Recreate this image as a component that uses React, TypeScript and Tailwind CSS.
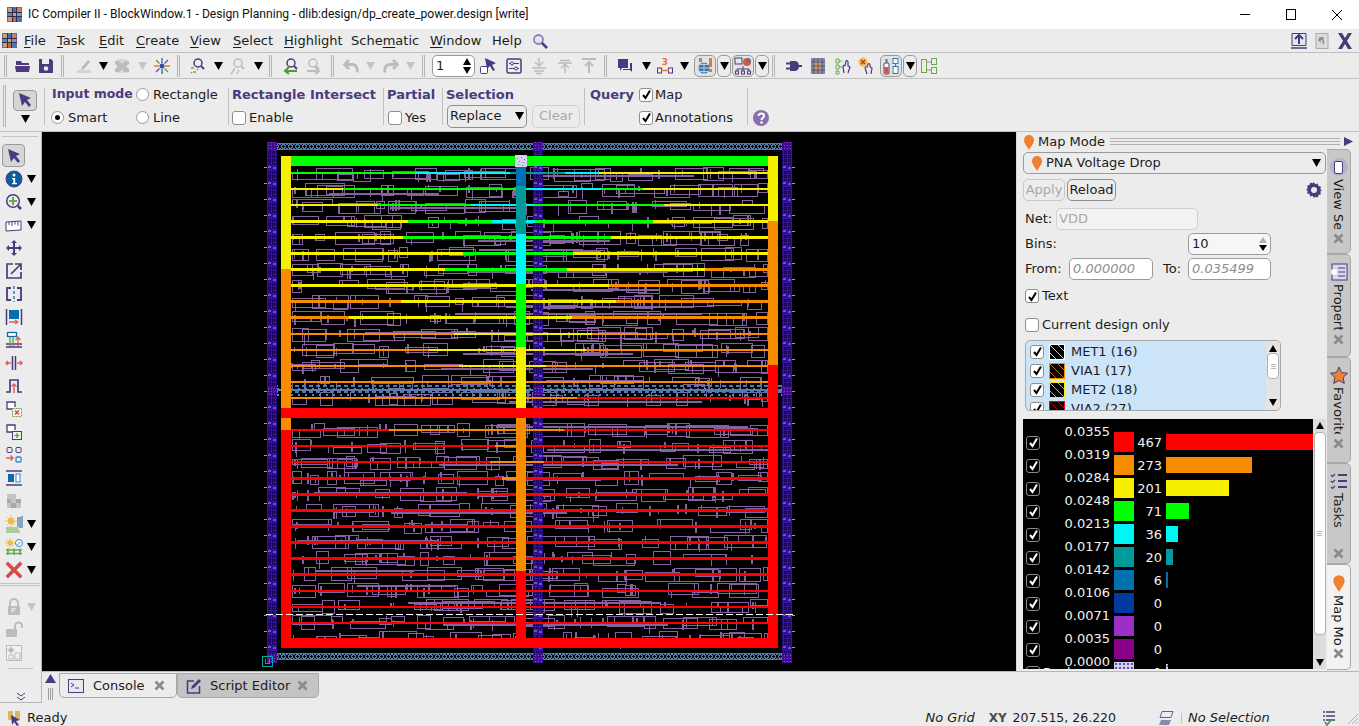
import type { ReactNode } from "react";

const P = "#4b3a7d";
const G = "#bcbcbc";
const RED = "#ff0000";
const ORG = "#f88c00";
const YEL = "#f5f000";
const GRN = "#00ff00";
const CYN = "#00f5f5";
const TEA = "#009a9a";
const BLU = "#0070b0";

const S = ({ children, size = 18 }: { children: ReactNode; size?: number }) => (
  <svg width={size} height={size} viewBox="0 0 18 18" className="block shrink-0">
    {children}
  </svg>
);

const Tri = ({ gray = false }: { gray?: boolean }) => (
  <svg width="9" height="8" viewBox="0 0 9 8" className="block shrink-0">
    <polygon points="0,0 9,0 4.5,8" fill={gray ? "#c4c4c4" : "#000"} />
  </svg>
);

const Arrow = () => (
  <S>
    <path d="M3 2l12 5-4 2 4 5-2 2-4-5-3 4z" fill={P} />
  </S>
);

const AppIcon = () => (
  <svg width="15" height="15" viewBox="0 0 15 15" className="block shrink-0">
    <rect width="15" height="15" fill="#6a6a8a" />
    <rect x="1" y="1" width="4" height="4" fill="#c9a070" />
    <rect x="6" y="1" width="3" height="4" fill="#3a78b0" />
    <rect x="10" y="1" width="4" height="4" fill="#d08060" />
    <rect x="1" y="6" width="4" height="3" fill="#5a8ab8" />
    <rect x="6" y="6" width="3" height="3" fill="#e0a050" />
    <rect x="10" y="6" width="4" height="3" fill="#7a9ac0" />
    <rect x="1" y="10" width="4" height="4" fill="#d89868" />
    <rect x="6" y="10" width="3" height="4" fill="#c86848" />
    <rect x="10" y="10" width="4" height="4" fill="#4a78a8" />
    <path d="M5.5 0v15M9.5 0v15M0 5.5h15M0 9.5h15" stroke="#2c2c50" strokeWidth="1" />
  </svg>
);

const Mag = ({ c = P, x = 9, y = 6 }: { c?: string; x?: number; y?: number }) => (
  <>
    <circle cx={x} cy={y} r="4" fill="none" stroke={c} strokeWidth="1.5" />
    <path d={`M${x + 3} ${y + 3}l3 3`} stroke={c} strokeWidth="2" />
  </>
);

const icons: Record<string, ReactNode> = {
  folder: (
    <S>
      <path d="M2 4h5l1 2h7v2H2z" fill={P} />
      <path d="M1 9h15l-1 6H2z" fill={P} />
    </S>
  ),
  save: (
    <S>
      <path d="M2 2h12l2 2v12H2z" fill={P} />
      <rect x="5" y="2" width="7" height="5" fill="#ececec" />
      <circle cx="9" cy="11.5" r="2.3" fill="#ececec" />
    </S>
  ),
  pencil: (
    <S>
      <path d="M7 10l6-7 2 2-6 7-3 1z" fill={G} />
      <rect x="2" y="13" width="14" height="3" fill="#d4d4d4" />
    </S>
  ),
  grayx: (
    <S>
      <rect x="4" y="2" width="10" height="14" fill="#d6d6d6" />
      <path d="M2 4h4l3 3 3-3h4v3l-3 2 3 3v3h-4l-3-3-3 3H2v-3l3-3-3-2z" fill={G} />
    </S>
  ),
  star: (
    <S>
      <path d="M9 1v5M9 12v5" stroke="#3a78b0" strokeWidth="1.5" />
      <path d="M1 9h5M12 9h5" stroke="#e07a30" strokeWidth="1.5" />
      <path d="M3 3l3.5 3.5M11.5 11.5L15 15" stroke="#6aa84f" strokeWidth="1.5" />
      <path d="M15 3l-3.5 3.5M6.5 11.5L3 15" stroke="#7a5ab0" strokeWidth="1.5" />
      <circle cx="9" cy="9" r="2.5" fill="#3a4a9a" />
    </S>
  ),
  selmag: (
    <S>
      <Mag />
      <path d="M2 11h3M4 15h3M2 16l1-1M8 12l1 1" stroke="#6aa84f" strokeWidth="1.5" />
    </S>
  ),
  graymag: (
    <S>
      <Mag c={G} />
      <path d="M6 11l-4 6M10 13l-2 4" stroke={G} strokeWidth="1.5" />
    </S>
  ),
  magback: (
    <S>
      <Mag />
      <path d="M15 14H4M7 10l-4 4 4 3" fill="none" stroke="#4f9a3f" strokeWidth="2" />
    </S>
  ),
  magfwd: (
    <S>
      <Mag c={G} />
      <path d="M3 14h11M11 10l4 4-4 3" fill="none" stroke={G} strokeWidth="2" />
    </S>
  ),
  undo: (
    <S>
      <path d="M7 3L2.500 7.500 7 12M3 7.500h7c4 0 6 3 5 8" fill="none" stroke={G} strokeWidth="2.800" />
    </S>
  ),
  redo: (
    <S>
      <path d="M11 3l4.500 4.500L11 12M15 7.500H8c-4 0-6 3-5 8" fill="none" stroke={G} strokeWidth="2.800" />
    </S>
  ),
  cursorbox: (
    <S>
      <rect x="1.5" y="9.5" width="7" height="7" rx="1" fill="#fff" stroke={P} />
      <path d="M6 1l11 5-4 2 3 5-2 1-3-5-3 3z" fill={P} />
    </S>
  ),
  settings: (
    <S>
      <rect x="2" y="2" width="14" height="14" rx="1.5" fill="none" stroke={P} strokeWidth="1.5" />
      <path d="M4 6.5h10M4 11.5h10" stroke={P} />
      <circle cx="7" cy="6.5" r="1.5" fill="#ececec" stroke={P} />
      <circle cx="11" cy="11.5" r="1.5" fill="#ececec" stroke={P} />
    </S>
  ),
  aligndown: (
    <S>
      <path d="M9 1v8M5 5l4 4 4-4" fill="none" stroke={G} strokeWidth="1.5" />
      <path d="M2 11h14M4 14h10M6 16.5h6" stroke={G} strokeWidth="1.5" />
    </S>
  ),
  alignup: (
    <S>
      <path d="M9 16V8M5 11l4-4 4 4" fill="none" stroke={G} strokeWidth="1.5" />
      <path d="M2 6h14M4 3.5h10" stroke={G} strokeWidth="1.5" />
    </S>
  ),
  aligntop: (
    <S>
      <path d="M2 2h14" stroke={G} strokeWidth="2" />
      <path d="M9 16V5M5 9l4-4 4 4" fill="none" stroke={G} strokeWidth="2" />
    </S>
  ),
  chat: (
    <S>
      <path d="M2 2h10v9H6l-2 3v-3H2z" fill={P} />
      <path d="M14 6h2v9l-2-2H7v-1h7z" fill={P} />
    </S>
  ),
  dim3: (
    <S>
      <text x="9" y="8" fontSize="9" fontWeight="700" fill="#e07a30" textAnchor="middle" fontFamily="'DejaVu Sans', sans-serif">3</text>
      <rect x="1.5" y="11" width="4" height="5" fill="none" stroke={P} />
      <rect x="12.5" y="11" width="4" height="5" fill="none" stroke={P} />
      <path d="M5 13.5h8" stroke="#e07a30" strokeWidth="1.5" />
    </S>
  ),
  globe: (
    <S>
      <circle cx="8" cy="11" r="5.5" fill="#3a78b0" />
      <path d="M2.5 11h11M8 5.5v11M4 7.5h8M4 14.5h8" stroke="#d0e0f0" strokeWidth=".8" />
      <rect x="13" y="1" width="3" height="9" fill="#e07a30" />
      <rect x="13" y="12" width="3" height="3" fill="#e07a30" />
      <rect x="3" y="1" width="3" height="4" fill="#6aa84f" />
    </S>
  ),
  hier: (
    <S>
      <rect x="1" y="1" width="7" height="6" fill="#dfe8f2" stroke={P} />
      <circle cx="13" cy="5" r="4" fill="#d05a3a" />
      <path d="M13 1v4h4a4 4 0 0 0-4-4z" fill="#3a78b0" />
      <path d="M9 9v3M3 12h12M3 12v2M9 12v2M15 12v2" stroke={P} fill="none" />
      <rect x="1.5" y="14" width="3" height="3" fill="none" stroke={P} />
      <rect x="7.5" y="14" width="3" height="3" fill="none" stroke={P} />
      <rect x="13.5" y="14" width="3" height="3" fill="none" stroke={P} />
    </S>
  ),
  plug: (
    <S>
      <path d="M5 4h5c3 0 4 3 4 5s-1 5-4 5H5z" fill={P} />
      <path d="M1 6.5h4M1 11.5h4M14 9h3" stroke={P} strokeWidth="2" />
    </S>
  ),
  chip: (
    <S>
      <rect x="2" y="1" width="14" height="16" fill="#8a8aa8" />
      <rect x="5" y="4" width="8" height="10" fill="#d89868" />
      <path d="M5 1v16M9 1v16M13 1v16M2 5h14M2 9h14M2 13h14" stroke="#3a4a7a" strokeWidth=".8" />
    </S>
  ),
  hand: (
    <S>
      <path d="M2 2h3v4H2zM2 8h3v4H2zM2 14h3v3H2z" fill="none" stroke="#6aa84f" />
      <path d="M5 4h3M5 10h3" stroke="#6aa84f" />
      <path d="M10 16l-1-6c0-2 2-2 2-1l1-5c1-1 2 0 2 1v4l2 1-2 6" fill="none" stroke={P} strokeWidth="1.2" />
    </S>
  ),
  handx: (
    <S>
      <circle cx="6" cy="5" r="4.5" fill="#f0c040" />
      <path d="M4 3l4 4M8 3L4 7" stroke="#d03030" strokeWidth="1.5" />
      <path d="M10 17l-2-6c0-2 2-1 2-1l1-3c1-1 2 0 2 1v2l2 1-1 6" fill="none" stroke={P} strokeWidth="1.2" />
    </S>
  ),
  bottles: (
    <S>
      <rect x="2" y="6" width="5" height="11" rx="1" fill="#fff" stroke={P} />
      <rect x="2.5" y="10" width="4" height="6.5" fill="#e0503a" />
      <rect x="3.5" y="2" width="2" height="4" fill="#3a78b0" />
      <rect x="11" y="1.5" width="5" height="5" fill="#fff" stroke="#3a78b0" />
      <rect x="11" y="9.5" width="5" height="7" fill="#fff" stroke="#3a78b0" />
      <path d="M13.5 6v4" stroke="#3a78b0" />
    </S>
  ),
  greenlink: (
    <S>
      <rect x="1.5" y="2.5" width="5" height="13" fill="none" stroke="#6aa84f" />
      <rect x="11.5" y="1.5" width="5" height="6" fill="none" stroke="#6aa84f" />
      <rect x="11.5" y="10.5" width="5" height="6" fill="none" stroke="#6aa84f" />
      <path d="M6 5h6M6 13h6" stroke="#6aa84f" />
    </S>
  ),
  upbox: (
    <S>
      <path d="M2 1.5h14v12H2z" fill="#dfe8f2" stroke={P} />
      <path d="M9 12V3M5 7l4-4 4 4" fill="none" stroke={P} strokeWidth="2" />
      <path d="M1 16h16" stroke={P} strokeWidth="1.5" />
    </S>
  ),
  restore: (
    <S>
      <rect x="3" y="1.5" width="12" height="15" fill="#dcdcdc" stroke="#aaa" />
      <path d="M11 6H7L6 8l2 2M7 7c4 0 4 3 3 5" fill="none" stroke="#8a8a8a" strokeWidth="1.5" />
    </S>
  ),
  bigx: (
    <S>
      <path d="M2 1h4l3 5 3-5h4l-5 8 5 8h-4l-3-5-3 5H2l5-8z" fill={P} />
    </S>
  ),
  info: (
    <S>
      <circle cx="9" cy="9" r="8" fill="#0a5fa0" stroke={P} />
      <circle cx="9" cy="5" r="1.5" fill="#fff" />
      <path d="M7 8h3.2v5H12v1.3H7V13h1.3V9.3H7z" fill="#fff" />
    </S>
  ),
  zoomplus: (
    <S>
      <circle cx="8" cy="8" r="6.3" fill="none" stroke={P} strokeWidth="1.5" />
      <path d="M8 4v8M4 8h8" stroke="#6aa84f" strokeWidth="2" />
      <path d="M13 13l3 3" stroke={P} strokeWidth="2.5" />
    </S>
  ),
  ruler: (
    <S>
      <path d="M1 6l15-1v9l-15 1z" fill="#fff" stroke={P} />
      <path d="M4 6v3M7 6v4M10 5.500v3M13 5.500v4" stroke={P} />
    </S>
  ),
  move: (
    <S>
      <path d="M9 1l3 3h-2v4h4V6l3 3-3 3v-2h-4v4h2l-3 3-3-3h2v-4H4v2L1 9l3-3v2h4V4H6z" fill={P} />
    </S>
  ),
  export: (
    <S>
      <path d="M8 2H2v14h14v-6" fill="none" stroke={P} strokeWidth="1.7" />
      <path d="M6 12L15 3M10 2h6v6" fill="none" stroke={P} strokeWidth="1.7" />
    </S>
  ),
  split: (
    <S>
      <path d="M6 3H2v12h4M12 3h4v12h-4" fill="none" stroke={P} strokeWidth="1.8" />
      <path d="M9 1v16" stroke="#3a78b0" strokeWidth="1.5" strokeDasharray="3 2" />
    </S>
  ),
  fitbar: (
    <S>
      <path d="M1.500 1v16M16.500 1v16" stroke={P} strokeWidth="1.5" />
      <rect x="4" y="2" width="10" height="9" fill="#0a6cad" />
      <path d="M4 14h9M10 12l3 2-3 2" fill="none" stroke="#e0605a" strokeWidth="1.3" />
    </S>
  ),
  stack: (
    <S>
      <rect x="2.500" y="1.500" width="9" height="4" fill="#fff" stroke="#0a6cad" strokeWidth="1.3" />
      <path d="M1 13h16M1 16h16" stroke={P} strokeWidth="1.5" />
      <path d="M5 6v9M8 6v9" stroke="#6aa84f" strokeWidth="1.5" />
      <path d="M13 15V7M10.500 9l2.500-3 2.500 3" fill="none" stroke="#e0605a" strokeWidth="1.3" />
    </S>
  ),
  spread: (
    <S>
      <path d="M7.500 2v14M10.500 2v14" stroke={P} strokeWidth="1.5" />
      <path d="M1 9h5M3 7L1 9l2 2M12 9h5M15 7l2 2-2 2" fill="none" stroke="#e0605a" strokeWidth="1.5" />
    </S>
  ),
  step: (
    <S>
      <path d="M1 15h4V3h8v12h4" fill="none" stroke={P} strokeWidth="1.7" />
      <path d="M9 16V7M6.500 9.500L9 7l2.500 2.500" fill="none" stroke="#e0605a" strokeWidth="1.5" />
    </S>
  ),
  delbox: (
    <S>
      <path d="M8 9H2V2h8v5" fill="#fff" stroke={P} strokeWidth="1.3" />
      <rect x="7.500" y="8.500" width="9" height="8" fill="#f2f7ee" stroke="#6aa84f" strokeDasharray="2 1" />
      <path d="M10 10.500l4 4M14 10.500l-4 4" stroke="#e0403a" strokeWidth="1.3" />
    </S>
  ),
  addbox: (
    <S>
      <path d="M8 9H2V2h8v5" fill="#fff" stroke={P} strokeWidth="1.3" />
      <rect x="7.500" y="8.500" width="9" height="8" fill="#f2f7ee" stroke={P} />
      <path d="M12 10v5M9.500 12.500h5" stroke="#6aa84f" strokeWidth="1.5" />
    </S>
  ),
  fourbox: (
    <S>
      <rect x="2" y="1.500" width="5" height="5" rx="1" fill="none" stroke={P} />
      <rect x="11" y="1.500" width="5" height="5" rx="1" fill="none" stroke={P} />
      <rect x="11" y="11" width="5" height="5" rx="1" fill="none" stroke="#3a88c0" strokeWidth="1.3" />
      <path d="M1 12h7M5.500 9.500L8 12l-2.500 2.500" fill="none" stroke="#e0605a" strokeWidth="1.4" />
    </S>
  ),
  pillar: (
    <S>
      <path d="M1 2h16M1 16h16" stroke={P} strokeWidth="1.7" />
      <rect x="3" y="5" width="6" height="8" fill="#0a6cad" />
      <rect x="11" y="5" width="4" height="8" fill="#fff" stroke="#3a88c0" />
    </S>
  ),
  checker: (
    <S>
      <path d="M2 2h9v5h5v9H2z" fill="#c4c4c4" />
      <path d="M2 7h4v4H2zM6 11h5v5H6zM11 7h5v4h-5z" fill="#a8a8a8" />
    </S>
  ),
  sunlines: (
    <S>
      <circle cx="6" cy="6" r="3" fill="#f2a93a" />
      <path d="M6 0v12M0 6h12M2 2l8 8M10 2l-8 8" stroke="#f2c03a" strokeWidth="1" />
      <path d="M1 13h12M1 15h13M1 17h14" stroke="#6aa84f" strokeWidth="1.2" />
      <path d="M13 2v10M15 2v11M17 1v12" stroke="#3a78b0" strokeWidth="1.2" />
    </S>
  ),
  sunfence: (
    <S>
      <circle cx="5" cy="5" r="2.500" fill="#f2a93a" />
      <path d="M5 0v10M0 5h10M1.500 1.500l7 7M8.500 1.500l-7 7" stroke="#f2c03a" />
      <circle cx="14" cy="5" r="3.500" fill="#fff" stroke="#3a88c0" />
      <path d="M12.500 7l3-3" stroke="#3a88c0" />
      <path d="M1 12h16M1 15.500h16M3 10.500V17M9 10.500V17M15 10.500V17" stroke="#6aa84f" strokeWidth="1.6" />
    </S>
  ),
  redx: (
    <S>
      <path d="M3 0.500L9 6.500l6-6L17.500 3 11.500 9l6 6L15 17.500l-6-6-6 6L.500 15l6-6-6-6z" fill="#d84a4a" />
    </S>
  ),
  lock: (
    <S>
      <path d="M5 8V5a4 4 0 0 1 8 0v3" fill="none" stroke={G} strokeWidth="2" />
      <rect x="3" y="8" width="12" height="9" rx="1" fill={G} />
      <path d="M7 10.500h4M7 10.500v4M7 12.500h3" stroke="#ececec" />
    </S>
  ),
  unlock: (
    <S>
      <path d="M10 8V5a3.500 3.500 0 0 1 7 0v2" fill="none" stroke={G} strokeWidth="2" />
      <rect x="1" y="8" width="11" height="8" rx="1" fill={G} />
    </S>
  ),
  graychip: (
    <S>
      <rect x="1.500" y="1.500" width="15" height="15" fill="#f2f2f2" stroke={G} />
      <circle cx="6" cy="6" r="2.500" fill={G} />
      <path d="M6 2v8M2 6h8" stroke={G} />
      <rect x="4" y="11" width="4" height="4" fill="none" stroke={G} />
      <rect x="10" y="9" width="5" height="6" fill="none" stroke={G} />
    </S>
  ),
  gear: (
    <S>
      <path d="M9 1l1.200 2.300 2.500-.8.800 2.500 2.500.8-.8 2.500L17 9l-1.800 1.700.8 2.500-2.500.8-.8 2.500-2.500-.8L9 17l-1.200-2.300-2.500.8-.8-2.500-2.500-.8.8-2.500L1 9l1.800-1.700-.8-2.500 2.500-.8.8-2.500 2.500.8z" fill={P} />
      <circle cx="9" cy="9" r="3" fill="#ececec" />
    </S>
  ),
  help: (
    <svg width="16" height="16" viewBox="0 0 16 16" className="block">
      <circle cx="8" cy="8" r="8" fill="#8a6fb0" />
      <path d="M5.500 6c0-3.500 5.500-3.500 5.500 0 0 2-2.500 2-2.500 4" fill="none" stroke="#fff" strokeWidth="2" />
      <circle cx="8.500" cy="12.500" r="1.300" fill="#fff" />
    </svg>
  ),
};

const Sep = ({ className }: { className: string }) => (
  <div className={`flex h-[22px] items-center justify-center gap-[1px] ${className}`}>
    <div className="h-full w-[1px] bg-[#b4b4b4]" />
    <div className="h-full w-[1px] bg-[#b4b4b4]" />
  </div>
);

const Ic = ({ n, className = "w-[22px]" }: { n: string; className?: string }) => (
  <div className={`flex items-center justify-center ${className}`}>{icons[n]}</div>
);

const Dd = ({ gray = false, className = "w-[16px]" }: { gray?: boolean; className?: string }) => (
  <div className={`flex items-center justify-center ${className}`}>
    <Tri gray={gray} />
  </div>
);

const BoxIc = ({ n, className }: { n: string; className: string }) => (
  <div className={`flex h-[22px] w-[22px] items-center justify-center rounded-[5px] border border-[#9a9a9a] bg-[#e2e2e2] ${className}`}>{icons[n]}</div>
);

const BoxDd = ({ className }: { className: string }) => (
  <div className={`flex h-[22px] w-[14px] items-center justify-center rounded-[5px] border border-[#9a9a9a] ${className}`}>
    <Tri />
  </div>
);

const Check = ({ on = false, dark = false }: { on?: boolean; dark?: boolean }) => (
  <div className={`flex h-[14px] w-[14px] shrink-0 items-center justify-center rounded-[3px] border ${dark ? "border-[#8a8a8a] bg-black" : "border-[#8f8f8f] bg-white"}`}>
    {on && (
      <svg width="11" height="11" viewBox="0 0 11 11">
        <path d="M2 6l2.500 3L9 1.500" fill="none" stroke={dark ? "#fff" : "#000"} strokeWidth="2" />
      </svg>
    )}
  </div>
);

const Radio = ({ on = false }: { on?: boolean }) => (
  <div className="flex h-[13px] w-[13px] shrink-0 items-center justify-center rounded-full border border-[#9a9a9a] bg-white">
    {on && <div className="h-[5px] w-[5px] rounded-full bg-black" />}
  </div>
);

const Pin = ({ size = 16 }: { size?: number }) => (
  <svg width={size} height={size} viewBox="0 0 16 16" className="block shrink-0">
    <path d="M8 16C5 11 3 9 3 6a5 5 0 0 1 10 0c0 3-2 5-5 10z" fill="#f07f2e" />
  </svg>
);

const Mn = ({ a = "", u, b = "" }: { a?: string; u: string; b?: string }) => (
  <span>
    {a}
    <span className="underline underline-offset-2">{u}</span>
    {b}
  </span>
);

const Scroll = () => (
  <svg width="8" height="7" viewBox="0 0 8 7" className="block">
    <polygon points="4,0 8,7 0,7" fill="#000" />
  </svg>
);

const ScrollD = () => (
  <svg width="8" height="7" viewBox="0 0 8 7" className="block">
    <polygon points="0,0 8,0 4,7" fill="#000" />
  </svg>
);

// chip drawing: fake routing generated from a fixed seed so the picture is stable
let seed = 12345;
const rnd = (a: number, b: number) => {
  seed = (seed * 1103515245 + 12345) & 0x7fffffff;
  return a + Math.floor((seed / 0x7fffffff) * (b - a + 1));
};

const buildRouting = () => {
  let thin = "";
  let thick = "";
  for (let y = 167; y < 636; y += 16) {
    if (y > 405 && y < 418) continue;
    let x = 292;
    while (x < 765) {
      const w = rnd(8, 42);
      const h = rnd(5, 13);
      const o = rnd(0, 14 - h);
      if (rnd(0, 9) > 1) {
        const xe = Math.min(w, 767 - x);
        thin += `M${x}.5 ${y + o}.5h${xe}v${h}h-${xe}z`;
      }
      if (rnd(0, 9) > 3) thin += `M${x + rnd(1, 7)}.5 ${y + rnd(0, 6)}.5v${rnd(5, 12)}`;
      x += rnd(8, 30);
    }
    const s = rnd(291, 560);
    thick += `M${s} ${y + rnd(3, 12)}h${Math.min(rnd(80, 260), 768 - s)}`;
    for (let i = 0; i < 11; i++) {
      const vx = rnd(292, 760);
      thick += `M${vx} ${y + rnd(1, 5)}v${rnd(5, 11)}`;
    }
  }
  return { thin, thick };
};

const routing = buildRouting();

type Seg = [number, string];
const strips: [number, number, Seg[]][] = [
  [172, 2, [[415, GRN], [510, CYN], [565, TEA], [599, CYN], [768, YEL]]],
  [188, 2, [[343, YEL], [521, GRN], [601, CYN], [643, GRN], [768, YEL]]],
  [204, 2, [[378, YEL], [471, GRN], [534, CYN], [664, GRN], [768, YEL]]],
  [220, 3, [[408, YEL], [492, GRN], [535, CYN], [653, GRN], [768, YEL]]],
  [236, 3, [[403, YEL], [611, GRN], [768, YEL]]],
  [252, 3, [[463, YEL], [573, GRN], [768, YEL]]],
  [268, 3, [[445, YEL], [567, GRN], [705, YEL], [768, ORG]]],
  [284, 3, [[609, YEL], [768, ORG]]],
  [300, 3, [[401, ORG], [616, YEL], [768, ORG]]],
  [316, 3, [[349, ORG], [572, YEL], [768, ORG]]],
  [333, 2, [[454, ORG], [592, YEL], [768, ORG]]],
  [349, 2, [[429, ORG], [586, YEL], [768, ORG]]],
  [365, 2, [[459, ORG], [546, YEL], [768, ORG]]],
  [381, 2, [[768, ORG]]],
  [397, 2, [[577, ORG], [768, RED]]],
  [429, 2, [[389, RED], [564, ORG], [768, RED]]],
  [445, 2, [[495, RED], [520, ORG], [768, RED]]],
  [461, 2, [[490, RED], [544, ORG], [768, RED]]],
  [477, 3, [[502, RED], [520, ORG], [768, RED]]],
  [493, 3, [[768, RED]]],
  [509, 3, [[768, RED]]],
  [525, 3, [[768, RED]]],
  [541, 3, [[768, RED]]],
  [557, 3, [[768, RED]]],
  [573, 3, [[768, RED]]],
  [590, 2, [[768, RED]]],
  [606, 2, [[768, RED]]],
  [622, 2, [[768, RED]]],
];

const ticks = Array.from({ length: 31 }, (_, i) => 165 + i * 16);

const Chip = () => (
  <svg width="974" height="539" viewBox="42 132 974 539" className="block shrink-0" shapeRendering="crispEdges">
    <defs>
      <pattern id="lat" x="0" y="142" width="7" height="9" patternUnits="userSpaceOnUse">
        <path d="M0 1.500h7M0 7.500h7M0 1.500l3.500 6 3.500-6M0 7.500l3.500-6 3.500 6" fill="none" stroke="#4c7bb2" strokeWidth="1" />
      </pattern>
      <pattern id="lat2" x="0" y="384" width="7" height="6" patternUnits="userSpaceOnUse">
        <rect x="1" y="1" width="4" height="2" fill="#4c7bb2" />
        <rect x="4" y="4" width="2" height="2" fill="#5a88b8" />
      </pattern>
      <pattern id="col" x="267" y="142" width="4" height="4" patternUnits="userSpaceOnUse">
        <rect width="4" height="4" fill="#160850" />
        <path d="M0 .500h4M.500 0v4M2 2h1" stroke="#3a14a0" strokeWidth="1" fill="none" />
      </pattern>
      <pattern id="mag" x="0" y="0" width="3" height="3" patternUnits="userSpaceOnUse">
        <rect width="3" height="3" fill="#3a1098" />
        <rect x="1" y="1" width="1" height="1" fill="#b030c8" />
      </pattern>
    </defs>
    <rect x="42" y="132" width="974" height="539" fill="#000" />
    <rect x="277" y="142" width="505" height="9" fill="url(#lat)" />
    <g transform="translate(0 510)">
      <rect x="277" y="142" width="505" height="9" fill="url(#lat)" />
    </g>
    <path d={routing.thick} fill="none" stroke="#87609f" strokeWidth="2" />
    <path d={routing.thin} fill="none" stroke="#87609f" strokeWidth="1" />
    <rect x="277" y="384" width="505" height="12" fill="url(#lat2)" />
    <rect x="277" y="389" width="505" height="2" fill="#5a7da8" />
    {[267, 533, 782].map((x) => (
      <g key={x}>
        <rect x={x} y="142" width="10" height="521" fill="url(#col)" />
        {ticks.map((y) => (
          <g key={y}>
            <rect x={x} y={y} width="10" height="5" fill="#28109a" />
            <rect x={x + 1} y={y + 1} width="3" height="2" fill="#8048c8" />
            <rect x={x + 6} y={y + 2} width="3" height="2" fill="#8048c8" />
          </g>
        ))}
        <rect x={x} y="142" width="10" height="9" fill="url(#mag)" />
        <rect x={x} y="653" width="10" height="9" fill="url(#mag)" />
        <rect x={x} y="386" width="10" height="9" fill="url(#mag)" />
      </g>
    ))}
    {ticks.map((y) => (
      <g key={y}>
        <rect x="264" y={y + 2} width="3" height="1" fill="#a0a0a0" />
        <rect x="792" y={y + 2} width="3" height="1" fill="#a0a0a0" />
      </g>
    ))}
    {strips.map(([y, h, segs]) =>
      segs.map(([xe, c], i) => {
        const xs = i === 0 ? 291 : segs[i - 1][0];
        return <rect key={`${y}-${i}`} x={xs} y={y} width={xe - xs} height={h} fill={c} />;
      }),
    )}
    <rect x="291" y="156" width="477" height="10" fill={GRN} />
    <rect x="281" y="156" width="10" height="113" fill={YEL} />
    <rect x="281" y="269" width="10" height="161" fill={ORG} />
    <rect x="281" y="430" width="10" height="218" fill={RED} />
    <rect x="768" y="156" width="10" height="65" fill={YEL} />
    <rect x="768" y="221" width="10" height="144" fill={ORG} />
    <rect x="768" y="365" width="10" height="283" fill={RED} />
    <rect x="516" y="166" width="10" height="20" fill={BLU} />
    <rect x="516" y="186" width="10" height="48" fill={TEA} />
    <rect x="516" y="234" width="10" height="50" fill={CYN} />
    <rect x="516" y="284" width="10" height="63" fill={GRN} />
    <rect x="516" y="347" width="10" height="61" fill={YEL} />
    <rect x="516" y="418" width="10" height="153" fill={ORG} />
    <rect x="516" y="571" width="10" height="67" fill={RED} />
    <rect x="281" y="408" width="497" height="10" fill={RED} />
    <rect x="281" y="638" width="497" height="10" fill={RED} />
    <rect x="515" y="155" width="12" height="12" fill="#d4d4f0" />
    <path d="M517 158h1M521 157h1M524 159h1M519 161h1M523 162h1M518 164h1M522 165h1" stroke="#40a060" />
    <path d="M266 614.500h527" stroke="#fff" strokeDasharray="7 3" />
    <rect x="262.500" y="656.500" width="10" height="10" fill="none" stroke="#00a8a8" />
    <path d="M265.500 659v4.500h4V659" fill="none" stroke="#00a8a8" />
  </svg>
);

const layers: [string, string][] = [
  ["MET1 (16)", "#ffffff"],
  ["VIA1 (17)", "#f88c00"],
  ["MET2 (18)", "#f5f000"],
  ["VIA2 (27)", "#ff0000"],
];

const bins: [string, string, string, string][] = [
  ["0.0355", "bg-[#ff0000]", "467", "w-[147px]"],
  ["0.0319", "bg-[#f88c00]", "273", "w-[86px]"],
  ["0.0284", "bg-[#f5f000]", "201", "w-[63px]"],
  ["0.0248", "bg-[#00ff00]", "71", "w-[23px]"],
  ["0.0213", "bg-[#00f5f5]", "36", "w-[12px]"],
  ["0.0177", "bg-[#009a9a]", "20", "w-[7px]"],
  ["0.0142", "bg-[#0070b0]", "6", "w-[2px]"],
  ["0.0106", "bg-[#003a9f]", "0", "w-0"],
  ["0.0071", "bg-[#9a30c8]", "0", "w-0"],
  ["0.0035", "bg-[#880088]", "0", "w-0"],
  ["0.0000", "bg-[#d4ccf4] bg-[radial-gradient(#5a50a0_1px,transparent_1px)] bg-[size:4px_4px]", "1", "w-[2px]"],
];

const leftRows: [string, boolean][] = [
  ["info", true],
  ["zoomplus", true],
  ["ruler", true],
  ["move", false],
  ["export", false],
  ["split", false],
  ["fitbar", false],
  ["stack", false],
  ["spread", false],
  ["step", false],
  ["delbox", false],
  ["addbox", false],
  ["fourbox", false],
  ["pillar", false],
  ["checker", false],
  ["sunlines", true],
  ["sunfence", true],
  ["redx", true],
];

const vtabs: [string, ReactNode, string, string][] = [
  ["View Settings", <div className="flex h-[18px] w-[18px] items-center justify-center rounded-full bg-[#b9b0d0]"><div className="h-[13px] w-[9px] rounded-[2px] border border-[#4b3a7d] bg-white" /></div>, "h-[105px]", "h-[50px]"],
  ["Properties", <svg width="18" height="18" viewBox="0 0 18 18"><rect x="2" y="1" width="15" height="16" fill="#dcd6ea" stroke="#4b3a7d" /><path d="M8 5h7M8 9h7M8 13h7" stroke="#4b3a7d" /><circle cx="4" cy="9" r="3" fill="#fff" /></svg>, "h-[103px]", "h-[46px]"],
  ["Favorites", <svg width="18" height="18" viewBox="0 0 18 18"><path d="M9 1l2.500 5.500 6 .8-4.400 4.100 1.200 6L9 14.500l-5.300 2.900 1.200-6L.5 7.300l6-.8z" fill="#f07f2e" stroke="#4b3a7d" /></svg>, "h-[106px]", "h-[47px]"],
  ["Tasks", <svg width="18" height="18" viewBox="0 0 18 18"><path d="M1 3l1.500 1.500L5 2M1 9l1.500 1.500L5 8M1 15l1.500 1.500L5 14" fill="none" stroke="#4b3a7d" strokeWidth="1.2" /><path d="M8 3h9M8 9h9M8 15h9" stroke="#4b3a7d" strokeWidth="2" /></svg>, "h-[101px]", "h-[51px]"],
];

const CloseX = ({ className = "" }: { className?: string }) => (
  <svg width="11" height="11" viewBox="0 0 11 11" className={`block shrink-0 ${className}`}>
    <path d="M1.500 1.500l8 8M9.500 1.500l-8 8" stroke="#8a8a8a" strokeWidth="2.600" />
  </svg>
);

const App = () => {
  return (
    <div className="flex h-[726px] w-[1359px] flex-col overflow-hidden bg-[#ececec] font-['DejaVu_Sans',sans-serif] text-[13px] text-[#1c1c1c]">
      {/* title bar */}
      <div className="flex h-[29px] shrink-0 items-center bg-white">
        <div className="ml-[7px] mr-[6px]">
          <AppIcon />
        </div>
        <span className="font-['Roboto',sans-serif] text-[12.15px] text-[#111]">IC Compiler II - BlockWindow.1 - Design Planning - dlib:design/dp_create_power.design [write]</span>
        <div className="ml-auto flex">
          <div className="flex h-[29px] w-[46px] items-center justify-center">
            <div className="h-[1px] w-[10px] bg-black" />
          </div>
          <div className="flex h-[29px] w-[46px] items-center justify-center">
            <div className="h-[11px] w-[10px] border border-black" />
          </div>
          <div className="flex h-[29px] w-[45px] items-center justify-center">
            <svg width="12" height="12" viewBox="0 0 12 12">
              <path d="M1 1l10 10M11 1L1 11" stroke="#000" />
            </svg>
          </div>
        </div>
      </div>

      {/* menu bar */}
      <div className="flex h-[23px] shrink-0 items-center bg-[#ececec] pl-[2px]">
        <div className="mr-[7px]">
          <AppIcon />
        </div>
        <div className="w-[33px]"><Mn u="F" b="ile" /></div>
        <div className="w-[42px]"><Mn u="T" b="ask" /></div>
        <div className="w-[37px]"><Mn u="E" b="dit" /></div>
        <div className="w-[54px]"><Mn u="C" b="reate" /></div>
        <div className="w-[43px]"><Mn u="V" b="iew" /></div>
        <div className="w-[51px]"><Mn u="S" b="elect" /></div>
        <div className="w-[67px]"><Mn u="H" b="ighlight" /></div>
        <div className="w-[79px]"><Mn a="Sche" u="m" b="atic" /></div>
        <div className="w-[62px]"><Mn u="W" b="indow" /></div>
        <div className="w-[40px]">Help</div>
        <svg width="16" height="16" viewBox="0 0 16 16" className="block">
          <circle cx="6.500" cy="6.500" r="4.500" fill="#dfe8f2" stroke="#8a80aa" strokeWidth="1.800" />
          <path d="M10 10l5 5" stroke="#4b3a7d" strokeWidth="2.500" />
        </svg>
        <div className="ml-auto flex pr-[3px]">
          <Ic n="upbox" className="w-[23px]" />
          <Ic n="restore" className="w-[23px]" />
          <Ic n="bigx" className="w-[23px]" />
        </div>
      </div>

      {/* main toolbar */}
      <div className="flex h-[27px] shrink-0 items-center border-y border-[#c0c0c0]">
        <Sep className="w-[11px]" />
        <Ic n="folder" className="w-[24px]" />
        <Ic n="save" />
        <Sep className="w-[10px]" />
        <Ic n="pencil" className="ml-[6px] w-[22px]" />
        <Dd />
        <Ic n="grayx" />
        <Dd gray className="w-[18px]" />
        <Ic n="star" />
        <Sep className="w-[10px]" />
        <Ic n="selmag" className="ml-[4px] w-[22px]" />
        <Dd className="w-[18px]" />
        <Ic n="graymag" />
        <Dd className="w-[18px]" />
        <Sep className="w-[6px]" />
        <Ic n="magback" className="ml-[7px] w-[22px]" />
        <Ic n="magfwd" />
        <Sep className="ml-[3px] w-[10px]" />
        <Ic n="undo" className="ml-[3px] w-[22px]" />
        <Dd gray />
        <Ic n="redo" className="ml-[2px] w-[22px]" />
        <Dd gray />
        <Sep className="w-[10px]" />
        <div className="ml-[4px] flex h-[22px] w-[43px] items-center justify-between rounded-[5px] border border-[#9a9a9a] bg-white pl-[3px] pr-[3px]">
          <span>1</span>
          <div className="flex flex-col gap-[2px]">
            <Scroll />
            <ScrollD />
          </div>
        </div>
        <Ic n="cursorbox" className="ml-[2px] w-[22px]" />
        <Ic n="settings" className="ml-[4px] w-[22px]" />
        <Ic n="aligndown" className="ml-[3px] w-[22px]" />
        <Ic n="alignup" className="ml-[4px] w-[22px]" />
        <Ic n="aligntop" className="ml-[2px] w-[22px]" />
        <Sep className="w-[10px]" />
        <Ic n="chat" className="ml-[4px] w-[22px]" />
        <Dd className="ml-[2px] w-[16px]" />
        <Ic n="dim3" />
        <Dd />
        <BoxIc n="globe" className="ml-[2px]" />
        <BoxDd className="ml-[1px]" />
        <BoxIc n="hier" className="ml-[1px]" />
        <BoxDd className="ml-[1px]" />
        <Sep className="w-[8px]" />
        <Ic n="plug" className="ml-[6px] w-[22px]" />
        <Ic n="chip" className="ml-[2px] w-[22px]" />
        <Ic n="hand" className="ml-[3px] w-[22px]" />
        <Ic n="handx" className="ml-[1px] w-[22px]" />
        <BoxIc n="bottles" className="ml-[3px]" />
        <BoxDd className="ml-[1px]" />
        <Ic n="greenlink" className="ml-[1px] w-[22px]" />
      </div>

      {/* option bar */}
      <div className="flex h-[53px] shrink-0 items-center border-b border-[#c0c0c0] pt-[2px]">
        <div className="ml-[3px] mr-[7px] flex h-[42px] gap-[1px]">
          <div className="w-[1px] bg-[#b4b4b4]" />
          <div className="w-[1px] bg-[#b4b4b4]" />
        </div>
        <div className="flex w-[24px] flex-col items-center">
          <div className="flex h-[21px] w-[24px] items-center justify-center rounded-[4px] border border-[#9a9a9a] bg-[#d6d6d6]"><Arrow /></div>
          <div className="mt-[4px]"><Tri /></div>
        </div>
        <div className="ml-[7px] h-[37px] w-[1px] bg-[#c0c0c0]" />
        <div className="ml-[7px] grid w-[176px] grid-cols-[91px_1fr] grid-rows-[23px_23px] items-center">
          <div className="text-[12.5px] font-bold text-[#4b3a7d]">Input mode</div>
          <div className="-ml-[7px] flex items-center gap-[4px]"><Radio /> <span>Rectangle</span></div>
          <div className="-ml-[1px] flex items-center gap-[4px]"><Radio on /> <span>Smart</span></div>
          <div className="-ml-[7px] flex items-center gap-[4px]"><Radio /> <span>Line</span></div>
        </div>
        <div className="h-[37px] w-[1px] bg-[#c0c0c0]" />
        <div className="ml-[3px] flex w-[151px] flex-col gap-[5px]">
          <div className="h-[18px] font-bold text-[#4b3a7d]">Rectangle Intersect</div>
          <div className="flex items-center gap-[3px]"><Check /> <span>Enable</span></div>
        </div>
        <div className="h-[37px] w-[1px] bg-[#c0c0c0]" />
        <div className="ml-[3px] flex w-[55px] flex-col gap-[5px]">
          <div className="h-[18px] font-bold text-[#4b3a7d]">Partial</div>
          <div className="flex items-center gap-[3px] pl-[1px]"><Check /> <span>Yes</span></div>
        </div>
        <div className="h-[37px] w-[1px] bg-[#c0c0c0]" />
        <div className="ml-[3px] flex w-[138px] flex-col gap-[2px]">
          <div className="h-[18px] font-bold text-[#4b3a7d]">Selection</div>
          <div className="flex items-center gap-[5px] pl-[1px]">
            <div className="flex h-[23px] w-[80px] items-center justify-between rounded-[5px] border border-[#8f8f8f] px-[2px]">
              <span>Replace</span>
              <Tri />
            </div>
            <div className="flex h-[23px] w-[48px] items-center justify-center rounded-[5px] border border-[#d0d0d0] text-[#a8a8a8]">Clear</div>
          </div>
        </div>
        <div className="h-[37px] w-[1px] bg-[#c0c0c0]" />
        <div className="ml-[5px] grid w-[152px] grid-cols-[49px_1fr] grid-rows-[23px_23px] items-center">
          <div className="font-bold text-[#4b3a7d]">Query</div>
          <div className="flex items-center gap-[2px]"><Check on /> <span>Map</span></div>
          <div />
          <div className="flex items-center gap-[2px]"><Check on /> <span>Annotations</span></div>
        </div>
        <div className="ml-[5px] h-[37px] w-[1px] bg-[#c0c0c0]" />
        <div className="ml-[5px] mt-[23px]">{icons.help}</div>
      </div>

      {/* work area */}
      <div className="flex h-[571px] shrink-0">
        <div className="flex w-[42px] shrink-0 flex-col items-start border-r border-b border-[#b8b8b8]">
          <div className="ml-[2px] mt-[4px] h-[1px] w-[36px] bg-[#c4c4c4]" />
          <div className="ml-[2px] mt-[7px] flex h-[23px] w-[23px] items-center justify-center rounded-[4px] border border-[#9a9a9a] bg-[#d6d6d6]">
            <Arrow />
          </div>
          {leftRows.map(([n, dd]) => (
            <div key={n} className="flex h-[23px] w-full items-center">
              <div className="flex w-[27px] justify-center">{icons[n]}</div>
              {dd && <Tri />}
            </div>
          ))}
          <div className="mt-[2px] flex w-[40px] flex-col gap-[1px]">
            <div className="h-[1px] bg-[#c4c4c4]" />
            <div className="h-[1px] bg-[#c4c4c4]" />
          </div>
          <div className="mt-[9px] flex h-[23px] w-full items-center">
            <div className="flex w-[27px] justify-center">{icons.lock}</div>
            <Tri gray />
          </div>
          <div className="flex h-[23px] w-[27px] items-center justify-center">{icons.unlock}</div>
          <div className="flex h-[23px] w-[27px] items-center justify-center">{icons.graychip}</div>
          <div className="ml-[8px] mt-[4px] h-[1px] w-[25px] bg-[#c4c4c4]" />
          <svg width="10" height="9" viewBox="0 0 10 9" className="ml-[16px] mt-[23px] block">
            <path d="M1 1l4 3 4-3M1 5l4 3 4-3" fill="none" stroke="#4b3a7d" />
          </svg>
        </div>

        <div className="flex min-w-0 flex-1 flex-col">
          <div className="flex h-[539px] shrink-0">
            <Chip />
            <div className="w-[1px] shrink-0 bg-[#d8d8d8]" />
            {/* map mode panel */}
            <div className="flex min-w-0 flex-1 flex-col">
              <div className="flex h-[17px] shrink-0 items-center pl-[4px] pt-[2px]">
                <Pin />
                <span className="ml-[1px] whitespace-nowrap">Map Mode</span>
                <div className="ml-[5px] flex h-[7px] w-[230px] shrink-0 flex-col justify-between">
                  <div className="h-[1px] bg-[#b0b0b0]" />
                  <div className="h-[1px] bg-[#b0b0b0]" />
                  <div className="h-[1px] bg-[#b0b0b0]" />
                </div>
                <svg width="9" height="9" viewBox="0 0 9 9" className="ml-[4px] block shrink-0">
                  <polygon points="0,0 9,4.500 0,9" fill="#4b3a7d" />
                </svg>
              </div>
              <div className="flex min-h-0 flex-1">
                <div className="w-[310px] shrink-0 pl-[6px] pt-[3px]">
                  <div className="flex h-[22px] w-[303px] items-center justify-between rounded-[5px] border border-[#9a9a9a] pl-[5px] pr-[4px]">
                    <div className="flex items-center gap-[1px]">
                      <Pin />
                      <span>PNA Voltage Drop</span>
                    </div>
                    <Tri />
                  </div>
                  <div className="mt-[5px] flex h-[22px] items-center gap-[2px]">
                    <div className="flex h-[22px] w-[42px] items-center justify-center rounded-[5px] border border-[#c8c8c8] text-[#a8a8a8]">Apply</div>
                    <div className="flex h-[22px] w-[49px] items-center justify-center rounded-[5px] border border-[#8f8f8f]">Reload</div>
                    <div className="ml-auto mr-[4px]">{icons.gear}</div>
                  </div>
                  <div className="mt-[7px] flex h-[22px] items-center">
                    <span className="w-[33px] pl-[2px]">Net:</span>
                    <div className="flex h-[22px] w-[142px] items-center rounded-[5px] border border-[#d0d0d0] bg-[#f2f2f2] pl-[2px] text-[#a8a8a8]">VDD</div>
                  </div>
                  <div className="mt-[3px] flex h-[22px] items-center">
                    <span className="w-[165px] pl-[2px]">Bins:</span>
                    <div className="flex h-[22px] w-[83px] items-center justify-between rounded-[5px] border border-[#9a9a9a] bg-[#f6f6f6] pl-[3px] pr-[3px]">
                      <span>10</span>
                      <div className="flex flex-col gap-[2px]">
                        <svg width="8" height="6" viewBox="0 0 8 6" className="block"><polygon points="4,0 8,6 0,6" fill="#b0b0b0" /></svg>
                        <svg width="8" height="6" viewBox="0 0 8 6" className="block"><polygon points="0,0 8,0 4,6" fill="#000" /></svg>
                      </div>
                    </div>
                  </div>
                  <div className="mt-[3px] flex h-[22px] items-center">
                    <span className="w-[46px] pl-[2px]">From:</span>
                    <div className="flex h-[22px] w-[84px] items-center rounded-[5px] border border-[#9a9a9a] bg-white pl-[3px] italic text-[#8e8e8e]">0.000000</div>
                    <span className="w-[35px] pl-[10px]">To:</span>
                    <div className="flex h-[22px] w-[83px] items-center rounded-[5px] border border-[#9a9a9a] bg-white pl-[3px] italic text-[#8e8e8e]">0.035499</div>
                  </div>
                  <div className="mt-[9px] flex h-[14px] items-center gap-[3px] pl-[2px]">
                    <Check on />
                    <span>Text</span>
                  </div>
                  <div className="mt-[15px] flex h-[14px] items-center gap-[3px] pl-[2px]">
                    <Check />
                    <span>Current design only</span>
                  </div>
                  <div className="ml-[2px] mt-[8px] flex h-[71px] w-[256px] overflow-hidden rounded-[5px] border border-[#a8a8a8] bg-[#cce4f7]">
                    <div className="flex-1 overflow-hidden pl-[4px] pt-[1px]">
                      {layers.map(([name, c]) => (
                        <div key={name} className="flex h-[19px] items-center">
                          <Check on />
                          <svg width="16" height="16" viewBox="0 0 16 16" className="ml-[5px] block shrink-0">
                            <rect x=".5" y=".5" width="15" height="15" fill="#000" stroke={c} />
                            <path d="M0 0l16 16M8 0l8 8M0 8l8 8" stroke={c} strokeWidth=".8" />
                          </svg>
                          <span className="ml-[6px] whitespace-nowrap">{name}</span>
                        </div>
                      ))}
                    </div>
                    <div className="flex w-[14px] flex-col items-center bg-[#e4e4e4]">
                      <div className="mt-[4px]"><Scroll /></div>
                      <div className="mt-[1px] flex h-[26px] w-[12px] flex-col items-center justify-center gap-[1px] rounded-[4px] border border-[#b0b0b0] bg-white">
                        <div className="h-[1px] w-[5px] bg-[#b8b8b8]" />
                        <div className="h-[1px] w-[5px] bg-[#b8b8b8]" />
                        <div className="h-[1px] w-[5px] bg-[#b8b8b8]" />
                      </div>
                      <div className="mt-auto mb-[4px]"><ScrollD /></div>
                    </div>
                  </div>
                  {/* histogram */}
                  <div className="mt-[8px] flex h-[250px] w-[303px]">
                    <div className="relative flex h-full w-[290px] overflow-hidden bg-black text-[#f2f2f2]">
                      <div className="w-[19px] shrink-0 pl-[3px] pt-[12px]">
                        {bins.map((b) => (
                          <div key={b[0]} className="flex h-[23px] items-center">
                            <Check on={b[0] !== "0.0000"} dark />
                            {b[0] === "0.0000" && <span className="ml-[3px] whitespace-nowrap">Background</span>}
                          </div>
                        ))}
                      </div>
                      <div className="w-[68px] shrink-0 pt-[1px]">
                        {bins.map((b) => (
                          <div key={b[0]} className="flex h-[23px] items-center justify-end">{b[0]}</div>
                        ))}
                      </div>
                      <div className="ml-[4px] flex w-[20px] shrink-0 flex-col gap-[3px] pt-[13px]">
                        {bins.map((b) => (
                          <div key={b[0]} className={`h-[20px] w-[20px] shrink-0 ${b[1]}`} />
                        ))}
                      </div>
                      <div className="w-[28px] shrink-0 pt-[12px]">
                        {bins.map((b) => (
                          <div key={b[0]} className="flex h-[23px] items-center justify-end">{b[2]}</div>
                        ))}
                      </div>
                      <div className="ml-[4px] flex flex-col gap-[7px] pt-[15px]">
                        {bins.map((b) => (
                          <div key={b[0]} className={`h-[16px] shrink-0 ${b[1]} ${b[3]}`} />
                        ))}
                      </div>
                    </div>
                    <div className="flex w-[13px] flex-col items-center bg-[#dcdcdc]">
                      <div className="mt-[3px]"><Scroll /></div>
                      <div className="mt-[3px] flex h-[203px] w-[12px] flex-col items-center justify-center gap-[1px] rounded-[4px] border border-[#b0b0b0] bg-white">
                        <div className="h-[1px] w-[5px] bg-[#b8b8b8]" />
                        <div className="h-[1px] w-[5px] bg-[#b8b8b8]" />
                        <div className="h-[1px] w-[5px] bg-[#b8b8b8]" />
                      </div>
                      <div className="mt-auto mb-[3px]"><ScrollD /></div>
                    </div>
                  </div>
                </div>
                {/* vertical tabs */}
                <div className="flex w-[25px] flex-col">
                  {vtabs.map(([label, icon, h, th]) => (
                    <div key={label} className={`flex w-[24px] shrink-0 flex-col items-center rounded-r-[5px] border-y border-r border-[#a8a8a8] bg-[#c8c8c8] pt-[8px] ${h}`}>
                      {icon}
                      <div className={`mt-[3px] overflow-hidden whitespace-nowrap [writing-mode:vertical-rl] ${th}`}>{label}</div>
                      <CloseX className="mt-[4px]" />
                    </div>
                  ))}
                  <div className="flex h-[106px] w-[24px] shrink-0 flex-col items-center rounded-r-[5px] border-y border-r border-[#a8a8a8] bg-[#f2f2f2] pt-[9px]">
                    <Pin size={18} />
                    <div className="mt-[3px] h-[50px] overflow-hidden whitespace-nowrap [writing-mode:vertical-rl]">Map Mode</div>
                    <CloseX className="mt-[3px]" />
                  </div>
                </div>
              </div>
            </div>
          </div>

          {/* bottom tabs */}
          <div className="flex h-[32px] shrink-0 border-t border-[#b8b8b8]">
            <div className="flex w-[17px] flex-col items-center pt-[2px]">
              <svg width="11" height="9" viewBox="0 0 11 9" className="block"><polygon points="5.500,0 11,9 0,9" fill="#4b3a7d" /></svg>
              <div className="mt-[5px] flex h-[12px] gap-[1px]">
                <div className="w-[1px] bg-[#a0a0a0]" />
                <div className="w-[1px] bg-[#a0a0a0]" />
                <div className="w-[1px] bg-[#a0a0a0]" />
              </div>
            </div>
            <div className="mt-[1px] flex h-[25px] w-[118px] items-center rounded-b-[5px] border border-[#a8a8a8] bg-[#ececec] pl-[8px]">
              <svg width="16" height="14" viewBox="0 0 16 14" className="block">
                <rect x=".5" y=".5" width="15" height="13" fill="#e8e8f0" stroke="#4b3a7d" />
                <path d="M3 4l3 2-3 2M7 9h4" fill="none" stroke="#4b3a7d" />
              </svg>
              <span className="ml-[9px] pt-[1px]">Console</span>
              <CloseX className="ml-[9px]" />
            </div>
            <div className="mt-[1px] flex h-[25px] w-[142px] items-center rounded-b-[5px] border border-[#a8a8a8] bg-[#c4c4c4] pl-[8px]">
              <svg width="16" height="16" viewBox="0 0 16 16" className="block">
                <path d="M8 3H1.500v12h12V8" fill="none" stroke="#4b3a7d" strokeWidth="1.500" />
                <path d="M5 11l1-3 7-7 2 2-7 7z" fill="#4b3a7d" />
              </svg>
              <span className="ml-[8px] pt-[1px]">Script Editor</span>
              <CloseX className="ml-[7px]" />
            </div>
          </div>
        </div>
      </div>

      {/* status bar */}
      <div className="flex h-[23px] shrink-0 items-center pl-[7px] pt-[7px]">
        <svg width="14" height="16" viewBox="0 0 14 16" className="block">
          <rect x="1" y="1" width="5" height="9" fill="#d8b860" />
          <rect x="8" y="1" width="5" height="9" fill="#d8b860" />
          <path d="M4 5l9 5-4 1 3 4-2 1-3-4-2 3z" fill="#4b3a7d" />
        </svg>
        <span className="ml-[6px]">Ready</span>
        <span className="ml-auto italic">No Grid</span>
        <span className="ml-[14px] text-[12px] font-bold text-[#4a4a4a]">XY</span>
        <span className="ml-[6px] text-[12.5px]">207.515, 26.220</span>
        <svg width="16" height="16" viewBox="0 0 16 16" className="ml-[42px] block">
          <path d="M4 1.500h11l-2 6H2z" fill="#eceaf4" stroke="#6a5a9a" />
          <path d="M3 10h10l-2 5H1z" fill="#8a8aaa" />
        </svg>
        <div className="ml-[7px] h-[10px] w-[1px] bg-[#c0c0c0]" />
        <span className="ml-[6px] w-[134px] italic">No Selection</span>
        <svg width="14" height="16" viewBox="0 0 14 16" className="block">
          <path d="M1 2h12M1 6h12M1 10h12" stroke="#4b3a7d" strokeWidth="1.500" strokeDasharray="2 1 9 0" />
          <path d="M3 12l2 3 4-5" fill="none" stroke="#4f9a3f" strokeWidth="1.800" />
        </svg>
        <svg width="12" height="14" viewBox="0 0 12 14" className="ml-[11px] block">
          <path d="M1 13L11 3M5 13l6-6M9 13l2-2" stroke="#b0b0b0" />
        </svg>
      </div>
    </div>
  );
};

export default App;
